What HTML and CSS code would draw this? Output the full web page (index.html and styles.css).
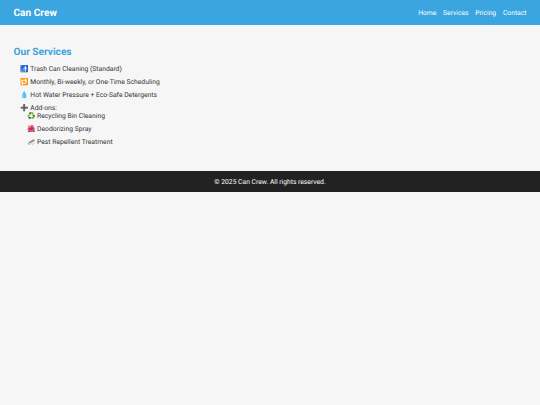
FILE: index.html
```
<!DOCTYPE html>
<html lang="en">
<head>
  <meta charset="UTF-8">
  <meta name="viewport" content="width=device-width, initial-scale=1.0">
  <title>Can Crew - Services</title>
  <link rel="stylesheet" href="styles.css">
</head>
<body>
  <header>
    <h1>Can Crew</h1>
    <nav>
      <a href="#">Home</a>
      <a href="#">Services</a>
      <a href="#">Pricing</a>
      <a href="#">Contact</a>
    </nav>
  </header>

  <section class="services">
    <h2>Our Services</h2>
    <ul>
      <li>🚮 Trash Can Cleaning (Standard)</li>
      <li>🔁 Monthly, Bi-weekly, or One-Time Scheduling</li>
      <li>💧 Hot Water Pressure + Eco-Safe Detergents</li>
      <li>➕ Add-ons:
        <ul>
          <li>♻️ Recycling Bin Cleaning</li>
          <li>🌺 Deodorizing Spray</li>
          <li>🦟 Pest Repellent Treatment</li>
        </ul>
      </li>
    </ul>
  </section>

  <footer>© 2025 Can Crew. All rights reserved.</footer>
</body>
</html>
```
FILE: styles.css
```
body {
  margin: 0;
  font-family: Roboto, sans-serif;
  font-size: 6.75px;
  line-height: 8px;
  text-rendering: geometricPrecision;
  background: #f6f6f6;
  color: #333;
}
header {
  display: flex;
  justify-content: space-between;
  align-items: center;
  height: 25.3px;
  background: #3ba5e0;
  color: #fff;
  padding: 0 13.5px;
}
h1 {
  margin: 0;
  padding-top: 2px;
  font-size: 10.125px;
  line-height: 12px;
}
nav {
  display: flex;
  gap: 6.75px;
  padding-top: 1px;
}
nav a {
  color: #fff;
  text-decoration: none;
}
.services {
  padding: 21.7px 13.5px 19.7px;
}
h2 {
  margin: 0 0 6px;
  font-size: 10.125px;
  line-height: 12px;
  color: #3ba5e0;
}
ul {
  list-style: none;
  margin: 0;
  padding-left: 6.75px;
}
li {
  margin-bottom: 5px;
}
footer {
  background: #222;
  color: #fff;
  text-align: center;
  padding: 7px 6.75px 6.5px;
}
```
